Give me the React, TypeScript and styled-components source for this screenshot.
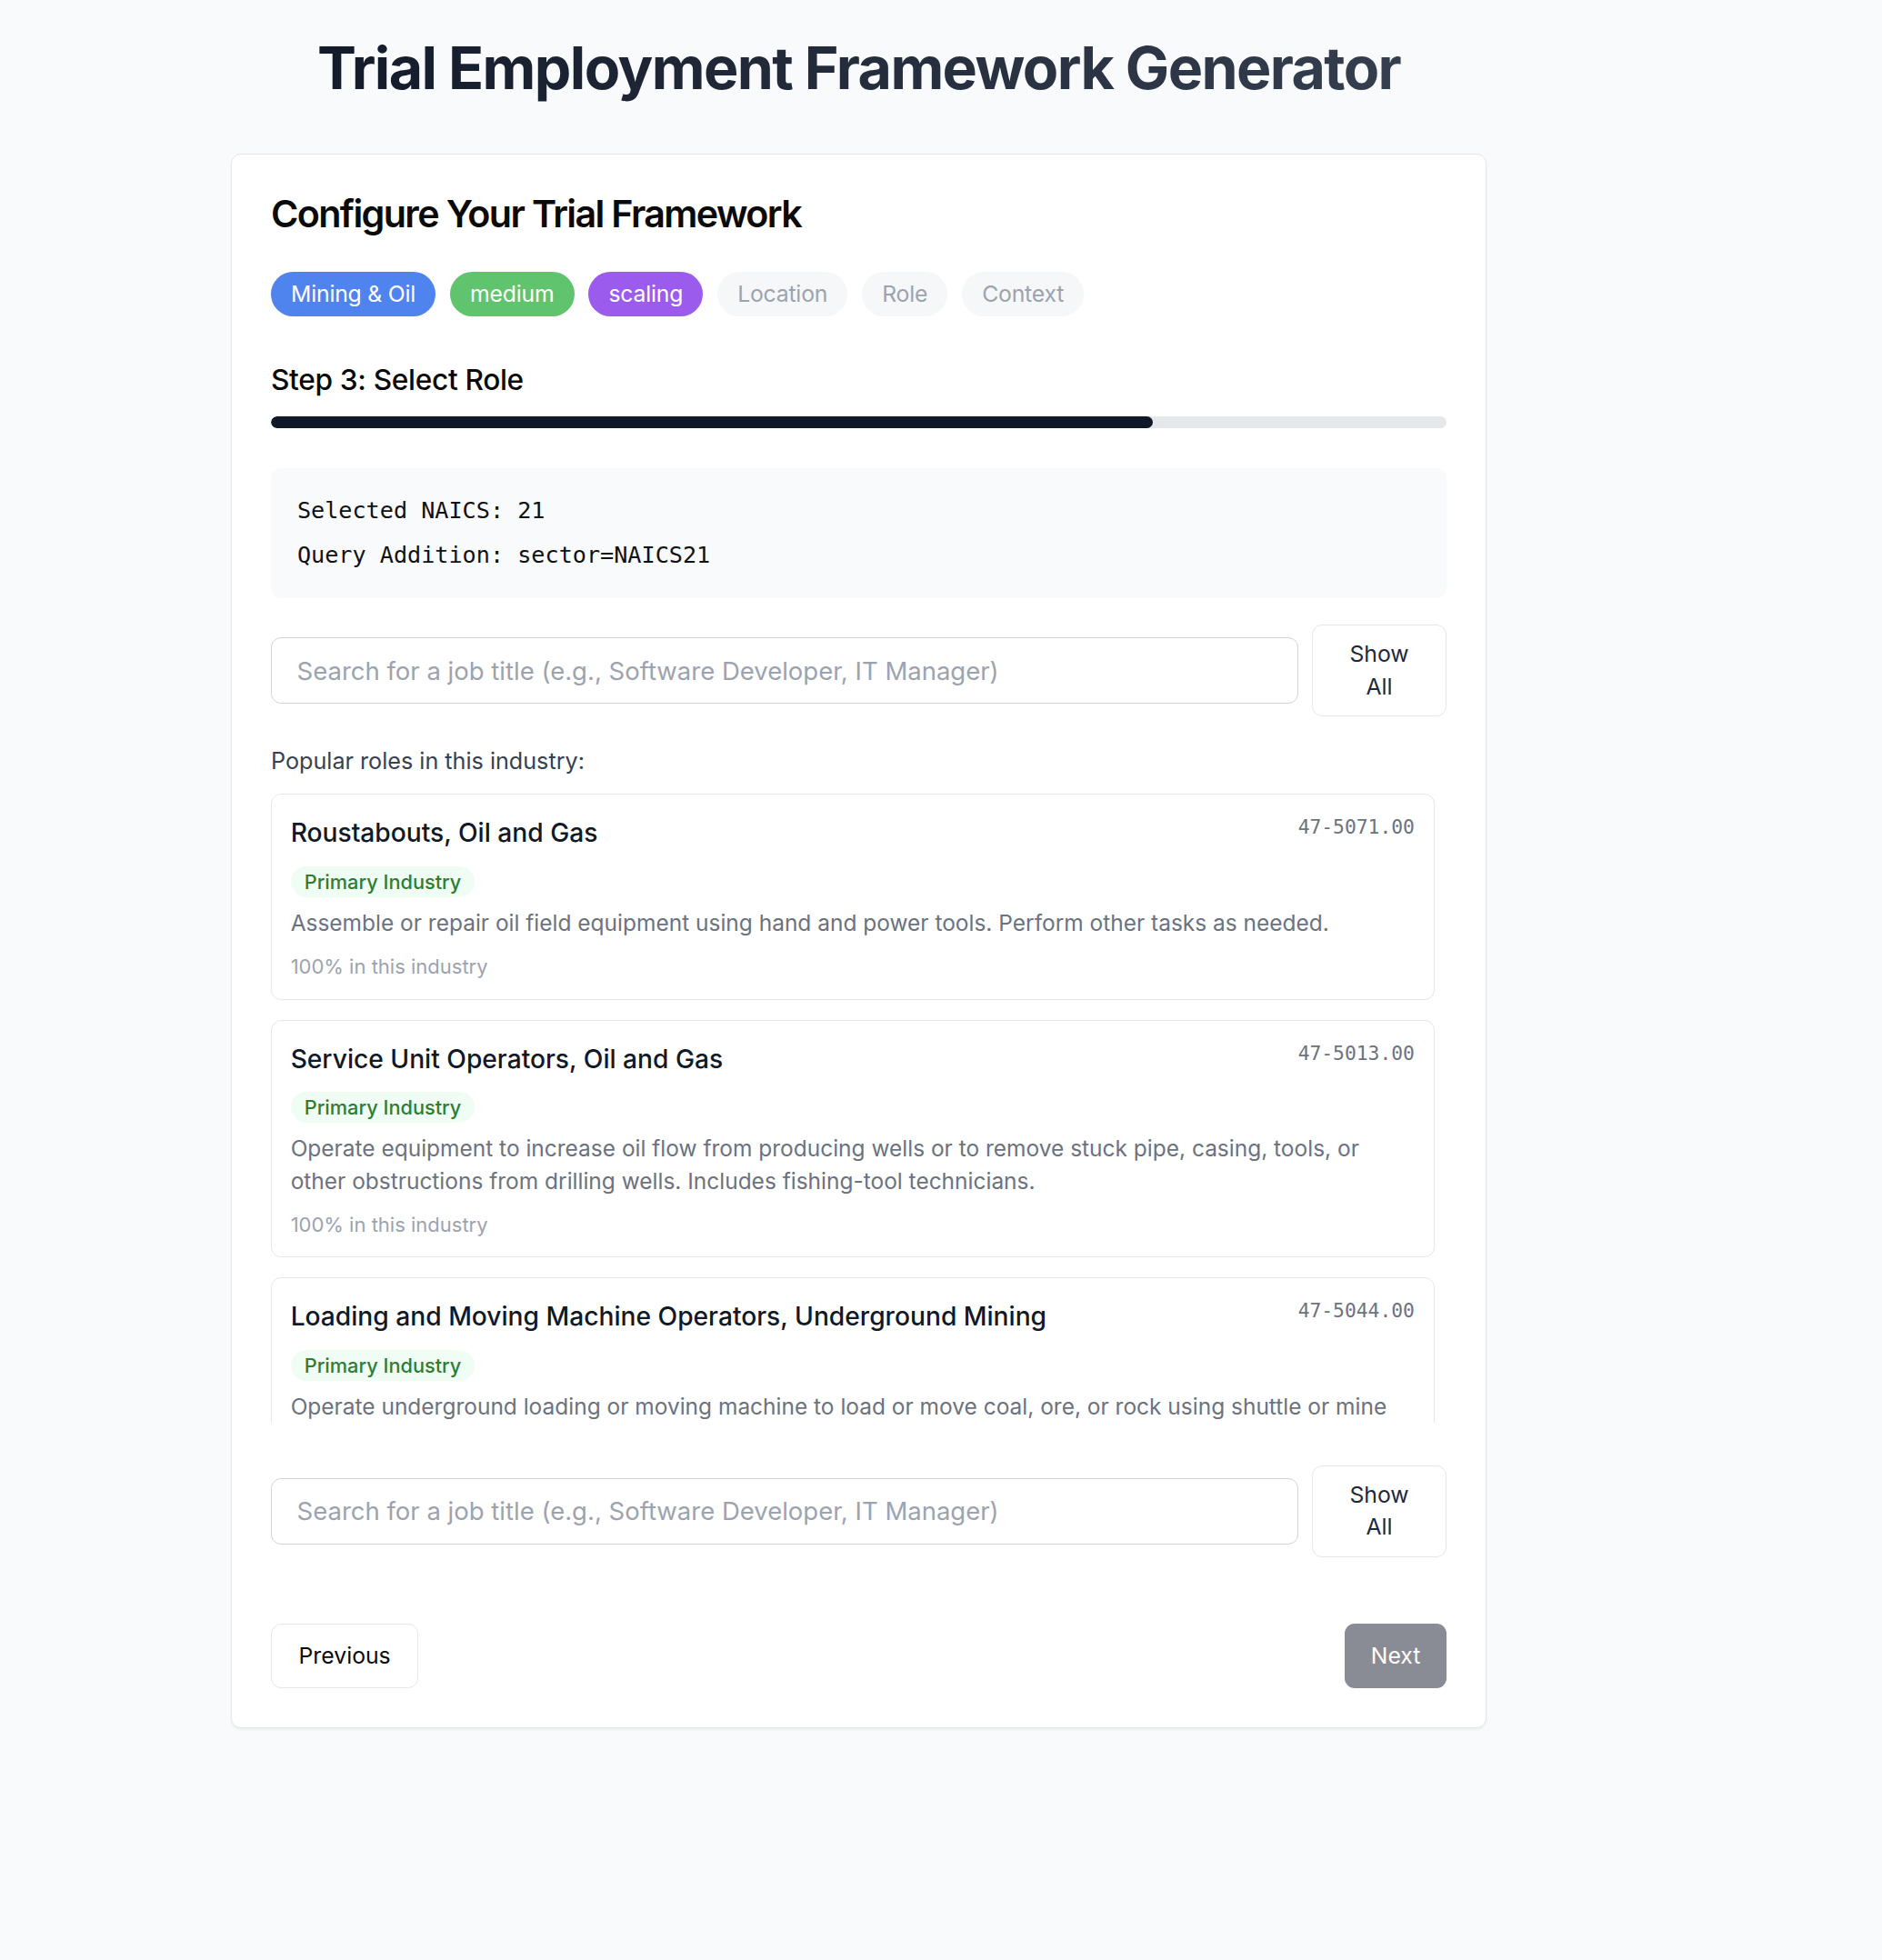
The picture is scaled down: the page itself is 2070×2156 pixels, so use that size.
import React from "react";
import styled, { createGlobalStyle } from "styled-components";

const GlobalStyle = createGlobalStyle`
  html, body {
    margin: 0;
    padding: 0;
    background: #f9fafb;
  }
  body {
    font-family: Inter, "Noto Sans", "Liberation Sans", sans-serif;
    color: #111827;
  }
  * {
    box-sizing: border-box;
  }
`;

type Pill = { label: string; tone: "blue" | "green" | "purple" | "idle" };

const pills: Pill[] = [
  { label: "Mining & Oil", tone: "blue" },
  { label: "medium", tone: "green" },
  { label: "scaling", tone: "purple" },
  { label: "Location", tone: "idle" },
  { label: "Role", tone: "idle" },
  { label: "Context", tone: "idle" },
];

const roles = [
  {
    title: "Roustabouts, Oil and Gas",
    code: "47-5071.00",
    description:
      "Assemble or repair oil field equipment using hand and power tools. Perform other tasks as needed.",
    share: "100% in this industry",
  },
  {
    title: "Service Unit Operators, Oil and Gas",
    code: "47-5013.00",
    description:
      "Operate equipment to increase oil flow from producing wells or to remove stuck pipe, casing, tools, or other obstructions from drilling wells. Includes fishing-tool technicians.",
    share: "100% in this industry",
  },
  {
    title: "Loading and Moving Machine Operators, Underground Mining",
    code: "47-5044.00",
    description:
      "Operate underground loading or moving machine to load or move coal, ore, or rock using shuttle or mine car or conveyors. Equipment may include power shovels, hoisting engines equipped with cable-drawn scraper or scoop, or machines equipped with gathering arms and conveyor.",
    share: "100% in this industry",
  },
];

const toneColors: Record<Pill["tone"], { bg: string; fg: string }> = {
  blue: { bg: "#4f83ee", fg: "#ffffff" },
  green: { bg: "#5fc46d", fg: "#ffffff" },
  purple: { bg: "#9b5ced", fg: "#ffffff" },
  idle: { bg: "#f6f7f9", fg: "#9ca3af" },
};

const step = 3;
const totalSteps = 4;

const App: React.FC = () => {
  return (
    <>
      <GlobalStyle />
      <Page>
        <Column>
          <Title>Trial Employment Framework Generator</Title>
          <Card>
            <CardHeading>Configure Your Trial Framework</CardHeading>
            <PillRow>
              {pills.map((p) => (
                <PillTag key={p.label} $tone={p.tone}>
                  {p.label}
                </PillTag>
              ))}
            </PillRow>

            <StepHeading>Step 3: Select Role</StepHeading>
            <Track>
              <Fill style={{ width: `${(step / totalSteps) * 100}%` }} />
            </Track>

            <CodeBox>
              <CodeLine>Selected NAICS: 21</CodeLine>
              <CodeLine>Query Addition: sector=NAICS21</CodeLine>
            </CodeBox>

            <SearchRow>
              <SearchInput placeholder="Search for a job title (e.g., Software Developer, IT Manager)" />
              <ShowAllButton>Show All</ShowAllButton>
            </SearchRow>

            <Hint>Popular roles in this industry:</Hint>
            <RoleList>
              {roles.map((r) => (
                <RoleCard key={r.code}>
                  <RoleHead>
                    <RoleTitle>{r.title}</RoleTitle>
                    <RoleCode>{r.code}</RoleCode>
                  </RoleHead>
                  <Badge>Primary Industry</Badge>
                  <RoleText>{r.description}</RoleText>
                  <RoleShare>{r.share}</RoleShare>
                </RoleCard>
              ))}
            </RoleList>

            <SearchRow $spaced>
              <SearchInput placeholder="Search for a job title (e.g., Software Developer, IT Manager)" />
              <ShowAllButton>Show All</ShowAllButton>
            </SearchRow>

            <Footer>
              <NavButton>Previous</NavButton>
              <NavButton $primary disabled>
                Next
              </NavButton>
            </Footer>
          </Card>
        </Column>
      </Page>
    </>
  );
};

const Page = styled.div`
  zoom: 1.375;
  min-height: 1568px;
  padding-top: 25px;
`;

const Column = styled.div`
  width: 1004px;
  margin-left: 185px;
`;

const Title = styled.h1`
  margin: 0 0 38px;
  text-align: center;
  font-size: 46.9px;
  line-height: 60px;
  font-weight: 700;
  letter-spacing: -0.025em;
  background: linear-gradient(to right, #111827, #374151);
  -webkit-background-clip: text;
  background-clip: text;
  color: transparent;
`;

const Card = styled.div`
  background: #ffffff;
  border: 1px solid #e5e7eb;
  border-radius: 8px;
  box-shadow: 0 1px 2px rgba(0, 0, 0, 0.05);
  padding: 31px;
`;

const CardHeading = styled.h2`
  margin: 0 0 31px;
  font-size: 30px;
  line-height: 32px;
  font-weight: 600;
  letter-spacing: -0.04em;
  color: #0a0a0a;
`;

const PillRow = styled.div`
  display: flex;
  gap: 11.6px;
  flex-wrap: wrap;
`;

const PillTag = styled.span<{ $tone: Pill["tone"] }>`
  display: inline-block;
  padding: 4px 16px;
  border-radius: 999px;
  font-size: 18px;
  line-height: 27px;
  letter-spacing: -0.008em;
  background: ${(p) => toneColors[p.$tone].bg};
  color: ${(p) => toneColors[p.$tone].fg};
`;

const StepHeading = styled.h3`
  margin: 35px 0 13px;
  font-size: 23px;
  line-height: 32px;
  font-weight: 500;
  letter-spacing: -0.01em;
  color: #0a0a0a;
`;

const Track = styled.div`
  height: 10px;
  border-radius: 999px;
  background: #e5e7eb;
  overflow: hidden;
`;

const Fill = styled.div`
  height: 100%;
  border-radius: 999px;
  background: #111827;
`;

const CodeBox = styled.div`
  margin-top: 32px;
  padding: 20px 21px;
  background: #f9fafb;
  border-radius: 8px;
  display: flex;
  flex-direction: column;
  gap: 8px;
`;

const CodeLine = styled.div`
  font-family: "DejaVu Sans Mono", "Liberation Mono", monospace;
  font-size: 18.3px;
  line-height: 28px;
  color: #111111;
`;

const SearchRow = styled.div<{ $spaced?: boolean }>`
  display: flex;
  align-items: center;
  gap: 11px;
  margin-top: ${(p) => (p.$spaced ? "34px" : "21px")};
`;

const SearchInput = styled.input`
  flex: 1;
  min-width: 0;
  height: 53px;
  padding: 0 20px;
  border: 1px solid #d1d5db;
  border-radius: 8px;
  background: #ffffff;
  font-family: inherit;
  font-size: 20px;
  line-height: 28px;
  color: #111827;
  outline: none;
  &::placeholder {
    color: #9ca3af;
  }
`;

const ShowAllButton = styled.button`
  width: 108px;
  flex-shrink: 0;
  padding: 10px 24px;
  border: 1px solid #e5e7eb;
  border-radius: 8px;
  background: #ffffff;
  font-family: inherit;
  font-size: 18px;
  line-height: 26px;
  color: #1f2937;
  cursor: pointer;
`;

const Hint = styled.p`
  margin: 24px 0 14px;
  font-size: 18.3px;
  line-height: 24px;
  color: #374151;
`;

const RoleList = styled.div`
  height: 503px;
  overflow-y: auto;
  padding-right: 10px;
  display: flex;
  flex-direction: column;
  gap: 16px;
  scrollbar-width: none;
  &::-webkit-scrollbar {
    display: none;
  }
`;

const RoleCard = styled.div`
  flex-shrink: 0;
  border: 1px solid #e5e7eb;
  border-radius: 8px;
  padding: 16px 15px 15px;
  background: #ffffff;
`;

const RoleHead = styled.div`
  display: flex;
  justify-content: space-between;
  align-items: flex-start;
  gap: 16px;
`;

const RoleTitle = styled.div`
  font-size: 20.5px;
  line-height: 30px;
  font-weight: 500;
  color: #111827;
`;

const RoleCode = styled.span`
  font-family: "DejaVu Sans Mono", "Liberation Mono", monospace;
  font-size: 15.5px;
  line-height: 20px;
  color: #6b7280;
  white-space: nowrap;
`;

const Badge = styled.span`
  display: inline-block;
  margin-top: 11px;
  padding: 0 11px;
  border-radius: 999px;
  background: #f0fdf4;
  color: #2e7d32;
  font-size: 15.8px;
  line-height: 25px;
  font-weight: 500;
`;

const RoleText = styled.p`
  margin: 8px 0 0;
  font-size: 17.8px;
  line-height: 26px;
  color: #6b7280;
`;

const RoleShare = styled.p`
  margin: 12px 0 0;
  font-size: 16px;
  line-height: 20px;
  color: #9ca3af;
`;

const Footer = styled.div`
  display: flex;
  justify-content: space-between;
  align-items: center;
  margin-top: 53px;
`;

const NavButton = styled.button<{ $primary?: boolean }>`
  padding: ${(p) => (p.$primary ? "13px 21px" : "12px 21.5px")};
  border: ${(p) => (p.$primary ? "none" : "1px solid #e5e7eb")};
  border-radius: 8px;
  background: ${(p) => (p.$primary ? "#898c95" : "#ffffff")};
  color: ${(p) => (p.$primary ? "#ffffff" : "#0a0a0a")};
  font-family: inherit;
  font-size: 18px;
  line-height: 26px;
  cursor: pointer;
`;

export default App;
